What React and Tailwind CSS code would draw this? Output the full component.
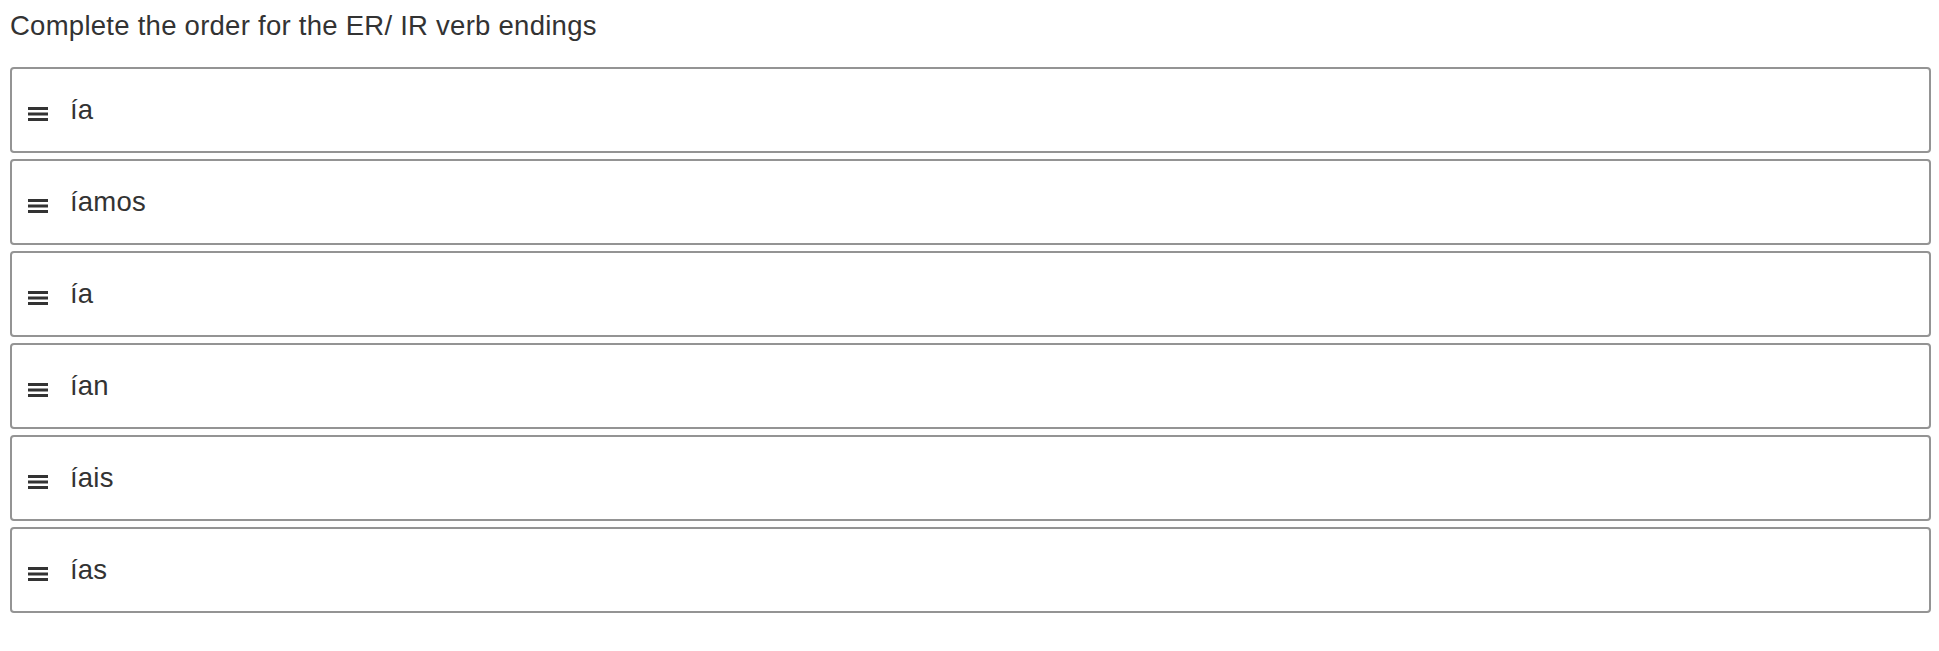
import React from "react";

const endings = ["ía", "íamos", "ía", "ían", "íais", "ías"];

// three-bar drag handle
const Handle = () => (
    <svg width="20" height="14" viewBox="0 0 20 14" className="shrink-0 mt-[8px]">
        <rect x="0" y="0" width="20" height="3" fill="#333333" />
        <rect x="0" y="5.5" width="20" height="3" fill="#333333" />
        <rect x="0" y="11" width="20" height="3" fill="#333333" />
    </svg>
);

const SortItem = ({ label }) => (
    <div className="h-[86px] flex items-center border-2 border-[#949494] rounded-[4px] bg-white pl-[16px]">
        <Handle />
        <span className="ml-[22px] leading-[32px] tracking-[0.2px]">{label}</span>
    </div>
);

export default function App() {
    return (
        <div
            className="min-h-screen bg-white text-[#333333] text-[27.5px] pt-[10px] pl-[10px] pr-[8px]"
            style={{ fontFamily: '"Liberation Sans", Arial, sans-serif' }}
        >
            <p className="leading-[32px] mb-[25px] tracking-[0.26px]">Complete the order for the ER/ IR verb endings</p>
            <div className="flex flex-col gap-[6px]">
                {endings.map((e, i) => (
                    <SortItem key={i} label={e} />
                ))}
            </div>
        </div>
    );
}
